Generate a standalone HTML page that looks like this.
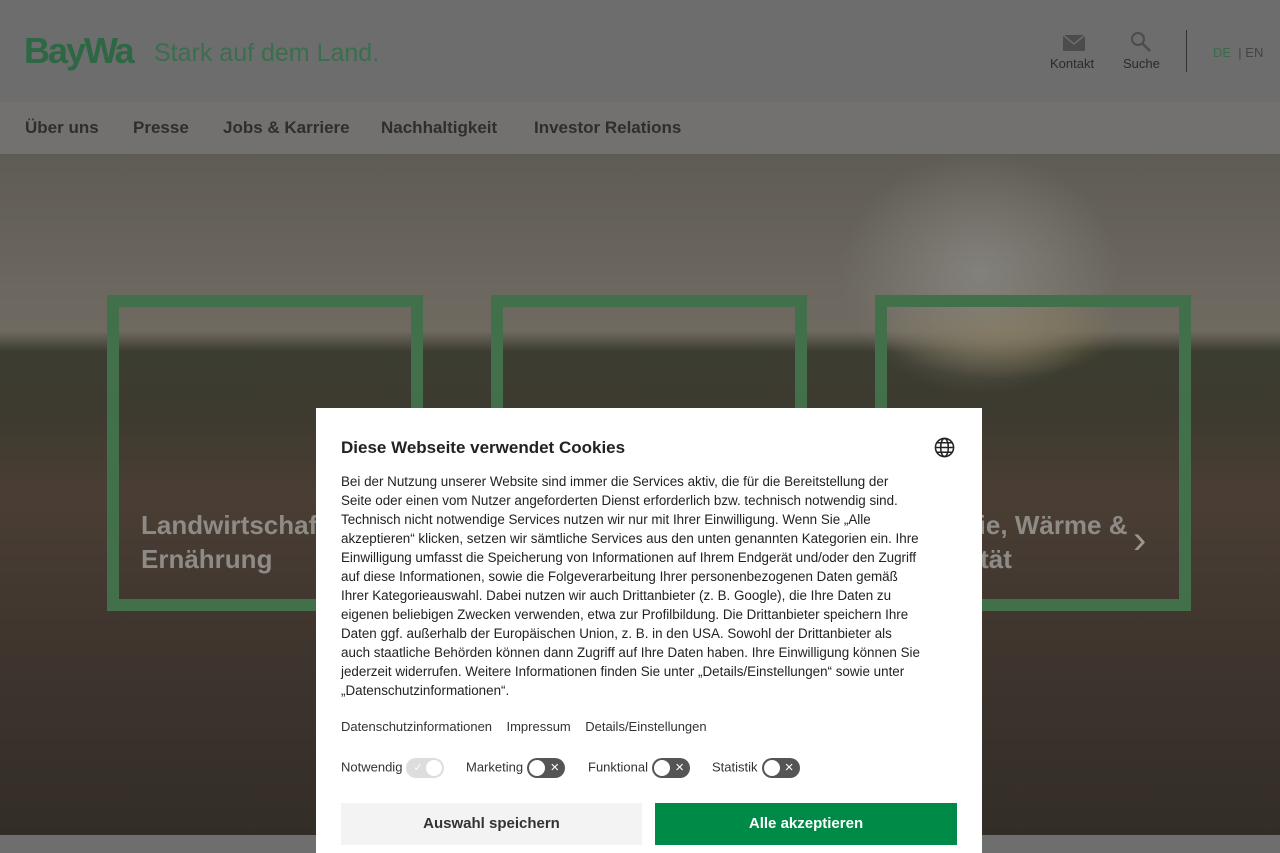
<!DOCTYPE html>
<html><head><meta charset="utf-8"><style>
*{margin:0;padding:0;box-sizing:border-box}
body{width:1280px;height:853px;overflow:hidden;font-family:"Liberation Sans",sans-serif;position:relative;background:#6e6e6e}
.hdr{position:absolute;left:0;top:0;width:1280px;height:102px;background:#6d6d6d}
.logo{position:absolute;left:24px;top:30px;font-size:36px;font-weight:bold;color:#2d6743;letter-spacing:-2px}
.tag{position:absolute;left:154px;top:39px;font-size:25px;color:#3a6e4d}
.nav{position:absolute;left:0;top:102px;width:1280px;height:52px;background:#727170}
.nav span{position:absolute;top:16px;font-size:17px;font-weight:bold;color:#2e2e2e}
.hero{position:absolute;left:0;top:154px;width:1280px;height:681px;
background:radial-gradient(ellipse 140px 120px at 980px 120px,#83817b 0%,rgba(120,118,110,0) 100%),
radial-gradient(ellipse 120px 50px at 1000px 175px,#86754f 0%,rgba(120,100,70,0) 100%),
linear-gradient(180deg,#5f5b55 0%,#6c6860 20%,#6f6a60 26%,#3c3d31 29%,#3d3a2f 38%,#4a3e34 50%,#3d342d 75%,#332d28 100%)}
.box{position:absolute;top:295px;width:316px;height:316px;border:12px solid #41704a}
.ht{position:absolute;font-size:26px;font-weight:bold;color:#8e8b86;line-height:34px}
.bot{position:absolute;left:0;top:835px;width:1280px;height:18px;background:#6e6e6e}
.modal{position:absolute;left:316px;top:408px;width:666px;height:445px;background:#fff;color:#222}
.modal h2{position:absolute;left:25px;top:30px;font-size:17px;font-weight:bold;color:#222}
.modal p{position:absolute;left:25px;top:64px;width:630px;font-size:13.4px;line-height:19px;color:#222;white-space:nowrap}
.links{position:absolute;left:25px;top:311px;font-size:13px;color:#333}
.tg{position:absolute;top:350px;font-size:13px;color:#333}
.sw{display:inline-block;width:38px;height:20px;border-radius:10px;background:#555;vertical-align:middle;position:relative;margin-left:4px}
.sw:before{content:"";position:absolute;left:2px;top:2px;width:16px;height:16px;border-radius:50%;background:#fff}
.sw:after{content:"×";position:absolute;right:6px;top:0;color:#fff;font-size:15px;line-height:20px}
.sw.d{background:#ddd}.sw.d:before{left:20px}.sw.d:after{content:"✓";left:7px;font-size:11px;color:#fff}
.b1,.b2{position:absolute;top:395px;height:42px;font-size:15px;font-weight:bold;text-align:center;line-height:42px}
.b1{left:25px;width:301px;background:#f3f3f3;color:#333}
.b2{left:339px;width:302px;background:#008a47;color:#fff}
</style></head><body>
<div class="hdr">
<div class="logo">BayWa</div><div class="tag">Stark auf dem Land.</div>
<svg style="position:absolute;left:1063px;top:35px" width="22" height="16"><rect x="0" y="0" width="22" height="16" fill="#4c4c4c"/><path d="M0 0L11 9L22 0" stroke="#6d6d6d" stroke-width="1.5" fill="none"/></svg>
<div style="position:absolute;left:1050px;top:56px;font-size:13px;color:#2a2a2a">Kontakt</div>
<svg style="position:absolute;left:1130px;top:31px" width="22" height="22"><circle cx="8" cy="8" r="6" stroke="#4c4c4c" stroke-width="2" fill="none"/><path d="M12 12L20 20" stroke="#4c4c4c" stroke-width="2.5"/></svg>
<div style="position:absolute;left:1123px;top:56px;font-size:13px;color:#2a2a2a">Suche</div>
<div style="position:absolute;left:1186px;top:30px;width:1px;height:42px;background:#333"></div>
<div style="position:absolute;left:1213px;top:45px;font-size:13px;color:#3d6a4c">DE <span style="color:#444">&nbsp;| EN</span></div>
</div>
<div class="nav"><span style="left:25px">Über uns</span><span style="left:133px">Presse</span><span style="left:223px">Jobs &amp; Karriere</span><span style="left:381px">Nachhaltigkeit</span><span style="left:534px">Investor Relations</span></div>
<div class="hero"></div>
<div class="box" style="left:107px"></div><div class="box" style="left:491px"></div><div class="box" style="left:875px"></div>
<div class="ht" style="left:141px;top:508px">Landwirtschaft &amp;<br>Ernährung</div>
<div class="ht" style="left:905px;top:508px">Energie, Wärme &amp;<br>Mobilität</div>
<div style="position:absolute;left:1133px;top:518px;font-size:40px;color:#9a9690">›</div>
<div class="bot"></div>
<div class="modal">
<h2>Diese Webseite verwendet Cookies</h2>
<svg style="position:absolute;left:618px;top:29px" width="21" height="21" viewBox="0 0 22 22"><g stroke="#222" stroke-width="1.6" fill="none"><circle cx="11" cy="11" r="9.5"/><ellipse cx="11" cy="11" rx="4" ry="9.5"/><path d="M1.5 11h19M3 6h16M3 16h16"/></g></svg>
<p>Bei der Nutzung unserer Website sind immer die Services aktiv, die für die Bereitstellung der<br>Seite oder einen vom Nutzer angeforderten Dienst erforderlich bzw. technisch notwendig sind.<br>Technisch nicht notwendige Services nutzen wir nur mit Ihrer Einwilligung. Wenn Sie „Alle<br>akzeptieren“ klicken, setzen wir sämtliche Services aus den unten genannten Kategorien ein. Ihre<br>Einwilligung umfasst die Speicherung von Informationen auf Ihrem Endgerät und/oder den Zugriff<br>auf diese Informationen, sowie die Folgeverarbeitung Ihrer personenbezogenen Daten gemäß<br>Ihrer Kategorieauswahl. Dabei nutzen wir auch Drittanbieter (z. B. Google), die Ihre Daten zu<br>eigenen beliebigen Zwecken verwenden, etwa zur Profilbildung. Die Drittanbieter speichern Ihre<br>Daten ggf. außerhalb der Europäischen Union, z. B. in den USA. Sowohl der Drittanbieter als<br>auch staatliche Behörden können dann Zugriff auf Ihre Daten haben. Ihre Einwilligung können Sie<br>jederzeit widerrufen. Weitere Informationen finden Sie unter „Details/Einstellungen“ sowie unter<br>„Datenschutzinformationen“.</p>
<div class="links">Datenschutzinformationen &nbsp;&nbsp; Impressum &nbsp;&nbsp; Details/Einstellungen</div>
<div class="tg" style="left:25px">Notwendig<span class="sw d"></span></div>
<div class="tg" style="left:150px">Marketing<span class="sw"></span></div>
<div class="tg" style="left:272px">Funktional<span class="sw"></span></div>
<div class="tg" style="left:396px">Statistik<span class="sw"></span></div>
<div class="b1">Auswahl speichern</div><div class="b2">Alle akzeptieren</div>
</div>
</body></html>
